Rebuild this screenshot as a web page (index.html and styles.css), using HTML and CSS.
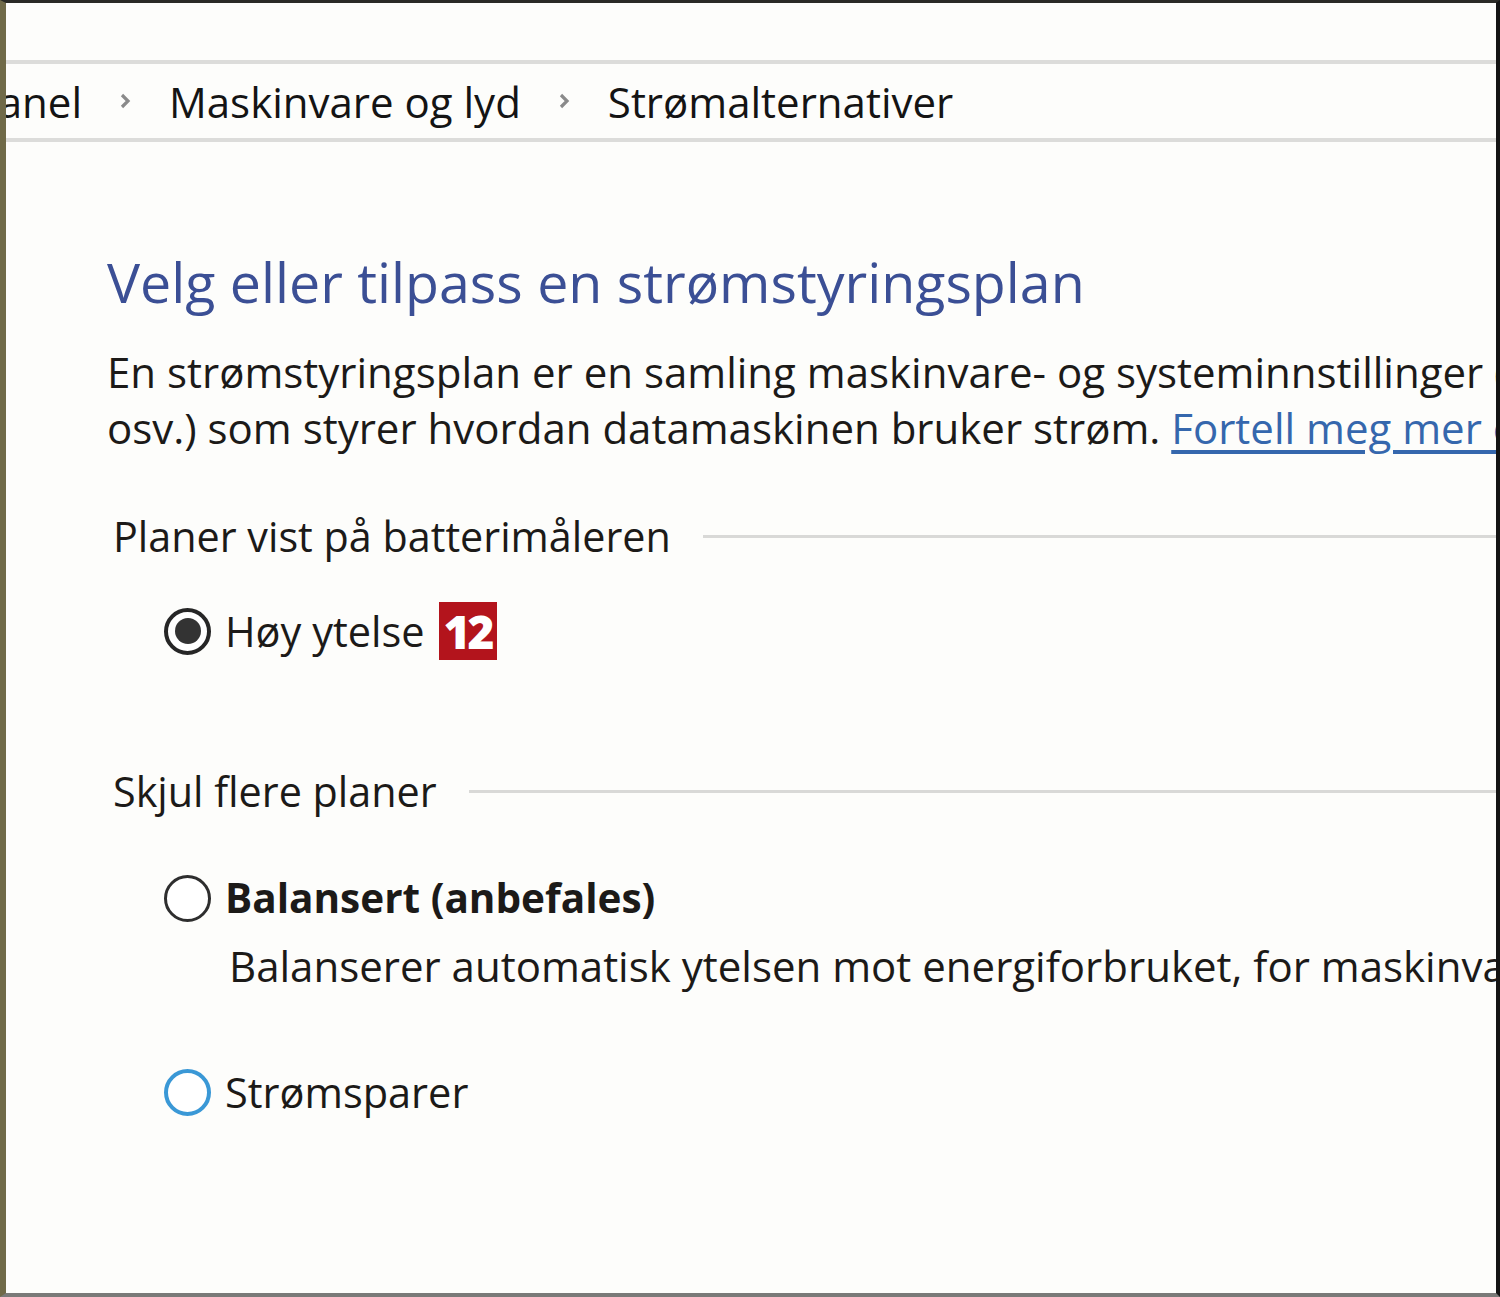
FILE: index.html
```html
<!DOCTYPE html>
<html lang="nb">
<head>
    <meta charset="UTF-8">
    <title>Strømalternativer</title>
    <link rel="stylesheet" href="styles.css">
</head>
<body>

    <div class="window">

        <!-- Empty strip above the address bar -->
        <div class="topbar"></div>

        <!-- Breadcrumb -->
        <nav class="crumbs">
            <span class="crumb cut">Kontrollpanel</span>
            <svg class="chev" width="14" height="20" viewBox="0 0 14 20"><path d="M4 4 L10 10 L4 16" fill="none" stroke="#8a8a8a" stroke-width="3.2"/></svg>
            <span class="crumb">Maskinvare og lyd</span>
            <svg class="chev" width="14" height="20" viewBox="0 0 14 20"><path d="M4 4 L10 10 L4 16" fill="none" stroke="#8a8a8a" stroke-width="3.2"/></svg>
            <span class="crumb">Strømalternativer</span>
        </nav>

        <main class="content">
            <h1>Velg eller tilpass en strømstyringsplan</h1>

            <p class="intro">
                <span class="line">En strømstyringsplan er en samling maskinvare- og systeminnstillinger (som skjermlysstyrke, hvilemodus</span>
                <span class="line">osv.) som styrer hvordan datamaskinen bruker strøm. <a href="#">Fortell meg mer om strømstyringsplaner</a></span>
            </p>

            <!-- Plans shown on the battery meter -->
            <section class="group">
                <div class="group-head">
                    <span>Planer vist på batterimåleren</span>
                    <span class="rule"></span>
                </div>
                <div class="plan">
                    <span class="radio checked"></span>
                    <span class="plan-name">Høy ytelse</span>
                    <span class="badge">12</span>
                </div>
            </section>

            <!-- Hidden plans -->
            <section class="group second">
                <div class="group-head">
                    <span>Skjul flere planer</span>
                    <span class="rule"></span>
                </div>
                <div class="plan">
                    <span class="radio"></span>
                    <span class="plan-name bold">Balansert (anbefales)</span>
                </div>
                <p class="plan-desc">Balanserer automatisk ytelsen mot energiforbruket, for maskinvare som støtter det.</p>
                <div class="plan saver">
                    <span class="radio focus"></span>
                    <span class="plan-name">Strømsparer</span>
                </div>
            </section>
        </main>

    </div>

</body>
</html>
```

FILE: styles.css
```css
/* Global */
html, body { margin: 0; height: 100%; }
body {
    font-family: "Open Sans", "Noto Sans", sans-serif;
    color: #1c1a18;
    background: #6e6a4c;
}

/* Window frame */
.window {
    height: 1297px;
    box-sizing: border-box;
    background: #fdfdfb;
    border-top: 3px solid #2a2a26;
    border-left: 6px solid #706a48;
    border-right: 4px solid #141414;
    border-bottom: 4px solid #7a7a78;
    overflow: hidden;
}

.topbar { height: 57px; }

/* Breadcrumb */
.crumbs {
    display: flex;
    align-items: center;
    height: 74px;
    border-top: 4px solid #dcdcda;
    border-bottom: 4px solid #dcdcda;
    white-space: nowrap;
    font-size: 42px;
    color: #141414;
}
.crumb.cut {
    display: inline-block;
    width: 76px;
    overflow: hidden;
    direction: rtl;
}
.chev { margin: 0 37px 0 36px; }

/* Content */
.content { padding: 0 0 0 101px; white-space: nowrap; }

h1 {
    margin: 100px 0 0;
    font-size: 55.5px;
    font-weight: 400;
    color: #3b4f95;
    line-height: 80px;
}

.intro {
    margin: 22px 0 0;
    font-size: 42px;
    line-height: 56px;
}
.intro .line { display: block; }
.intro a { color: #3567ad; text-decoration: underline; text-underline-offset: 6px; }

/* Groups */
.group { margin-top: 50px; }
.group.second { margin-top: 98px; }
.group-head {
    display: flex;
    align-items: center;
    gap: 32px;
    padding-left: 6px;
    font-size: 41.3px;
    line-height: 60px;
}
.group-head .rule {
    flex: 1;
    height: 3px;
    background: #d9d9d7;
}

.plan {
    display: flex;
    align-items: center;
    gap: 14px;
    margin: 33px 0 0 57px;
    font-size: 41.5px;
    line-height: 64px;
}
.group.second .plan { margin-top: 45px; }
.group.second .plan.saver { margin-top: 66px; }
.plan-name.bold { font-weight: 700; font-size: 40.5px; }

.radio {
    width: 47px;
    height: 47px;
    border: 3px solid #2e2e2e;
    border-radius: 50%;
    box-sizing: border-box;
    display: flex;
    align-items: center;
    justify-content: center;
    background: #fff;
}
.radio.checked { border-width: 4px; border-color: #262626; }
.radio.checked::after {
    content: "";
    width: 26px;
    height: 26px;
    border-radius: 50%;
    background: #333;
}
.radio.focus { border-color: #3a98d6; border-width: 4px; }

.badge {
    background: #b3141c;
    color: #fff;
    font-weight: 800;
    font-size: 46px;
    line-height: 58px;
    padding: 0 6px 0 5px;
    letter-spacing: -3px;
}

.plan-desc {
    margin: 8px 0 0 122px;
    font-size: 42px;
    line-height: 56px;
}
```
